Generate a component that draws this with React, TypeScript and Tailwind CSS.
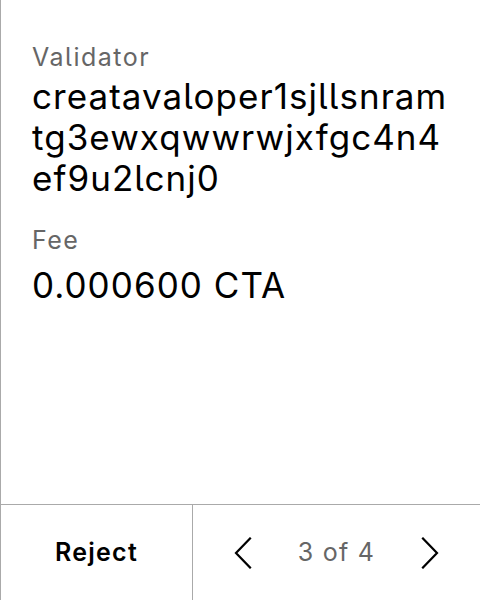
function Chevron({ dir }: { dir: "left" | "right" }) {
  return (
    <svg width="18" height="32" viewBox="0 0 18 32" fill="none" stroke="currentColor" strokeWidth="2.2" strokeLinecap="square">
      {dir === "left" ? <polyline points="16,1.5 2,16 16,30.5" /> : <polyline points="2,1.5 16,16 2,30.5" />}
    </svg>
  );
}

export default function App() {
  return (
    <div
      className="flex h-[600px] w-[480px] flex-col border-l border-[#aaaaaa] bg-white text-black"
      style={{ fontFamily: "Inter, 'Noto Sans', sans-serif", fontFeatureSettings: "'cv05'" }}
    >
      {/* Details */}
      <div className="flex-1 pl-[31px] pr-[12px] pt-[40px]">
        <div className="text-[25px] leading-[34px] tracking-[0.06em] text-[#666666]">Validator</div>
        <div className="mt-[2px] text-[35px] leading-[41px] tracking-[0.03em]">
          creatavaloper1sjllsnram
          <br />
          tg3ewxqwwrwjxfgc4n4
          <br />
          ef9u2lcnj0
        </div>
        <div className="mt-[24px] text-[25px] leading-[34px] tracking-[0.06em] text-[#666666]">Fee</div>
        <div className="mt-[8px] text-[35px] leading-[41px] tracking-[0.03em]">0.000600 CTA</div>
      </div>

      {/* Footer */}
      <div className="flex h-[96px] border-t border-[#aaaaaa]">
        <button className="flex w-[192px] items-center justify-center border-r border-[#aaaaaa] text-[25px] font-semibold tracking-[0.05em]">
          Reject
        </button>
        <div className="flex flex-1 items-center justify-center gap-[46px]">
          <Chevron dir="left" />
          <span className="text-[25px] tracking-[0.05em] text-[#666666]">3 of 4</span>
          <Chevron dir="right" />
        </div>
      </div>
    </div>
  );
}
